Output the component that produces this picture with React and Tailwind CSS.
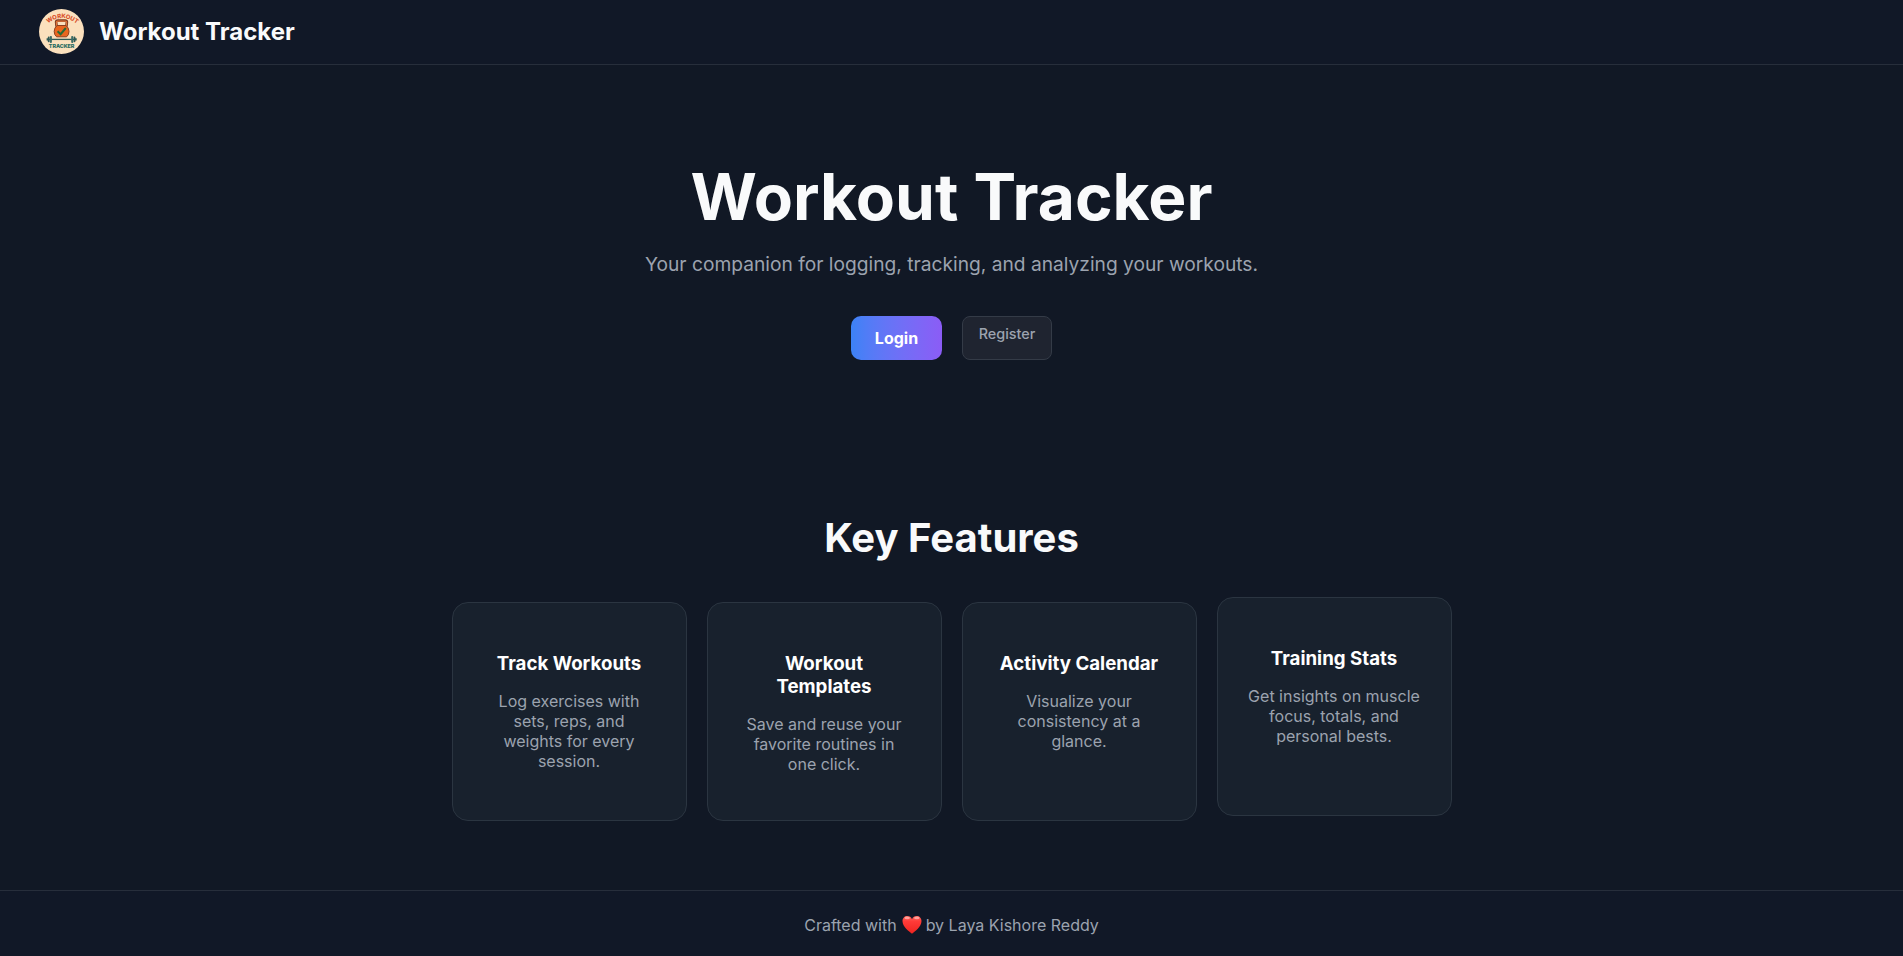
const FEATURES = [
  { title: "Track Workouts", text: "Log exercises with sets, reps, and weights for every session." },
  { title: "Workout Templates", text: "Save and reuse your favorite routines in one click." },
  { title: "Activity Calendar", text: "Visualize your consistency at a glance." },
  { title: "Training Stats", text: "Get insights on muscle focus, totals, and personal bests.", raised: true },
];

function Logo() {
  return (
    <svg viewBox="0 0 45 45" className="mb-px size-[45px] shrink-0">
      <defs>
        <path id="arc" d="M9 14.4 Q22.5 3.6 37 14.2" />
      </defs>
      <circle cx="22.5" cy="22.5" r="22.5" fill="#fbe0bd" />
      <text fill="#d9522c" className="font-[Inter] text-[6px] font-extrabold">
        <textPath href="#arc" textLength="31.5" lengthAdjust="spacing">WORKOUT</textPath>
      </text>
      <path d="M17.6 17.5 L17.1 13 Q17.2 11.6 18.8 11.6 H26.2 Q27.8 11.6 27.9 13 L27.4 17.5" fill="none" stroke="#7d3a20" strokeWidth="2.6" />
      <path d="M17.7 17 L17.3 13.3 Q17.4 12.1 18.7 12.1 H26.3 Q27.6 12.1 27.7 13.3 L27.3 17" fill="none" stroke="#e2743a" strokeWidth="1.1" />
      <path d="M18 16.5 H27 Q30 18.8 30 22.4 Q30 26 27.6 27.8 H17.6 Q15.2 26 15.2 22.4 Q15.2 18.8 18 16.5 Z" fill="#e9661f" stroke="#8a3f20" strokeWidth="1" />
      <path d="M18.6 22.2 L21.6 25.2 L26.8 19" fill="none" stroke="#2a6a35" strokeWidth="2" />
      <path d="M9 30.4 H36" stroke="#2f5a55" strokeWidth="1.3" />
      <path d="M7.6 29.3 h1.5 v2.2 h-1.5z M36 29.3 h1.7 v2.2 h-1.7z" fill="#2f5a55" />
      <rect x="8.8" y="27.6" width="1.8" height="5.6" rx=".8" fill="#2f5a55" />
      <rect x="10.8" y="26.9" width="2.1" height="7" rx=".9" fill="#3c6d66" />
      <rect x="32.2" y="26.9" width="2.1" height="7" rx=".9" fill="#3c6d66" />
      <rect x="34.6" y="27.6" width="1.8" height="5.6" rx=".8" fill="#2f5a55" />
      <text x="9.8" y="39.3" textLength="25.6" lengthAdjust="spacing" fill="#23695f" className="font-[Inter] text-[5.4px] font-extrabold">TRACKER</text>
    </svg>
  );
}

function Heart() {
  return (
    <svg viewBox="0 0 20 20" className="mr-1 ml-[5px] inline-block size-5 align-[-4px]">
      <defs>
        <linearGradient id="heart" x1="0" y1="0" x2="0" y2="1">
          <stop offset="0" stopColor="#ff6a61" />
          <stop offset=".3" stopColor="#ff3b38" />
          <stop offset="1" stopColor="#ee2420" />
        </linearGradient>
      </defs>
      <path d="M10 18.8 C7 16 .6 12 .5 6.2 C.5 3 2.6 1 5.2 1 C7.4 1 9.2 2.2 10 4.2 C10.8 2.2 12.6 1 14.8 1 C17.4 1 19.5 3 19.5 6.2 C19.4 12 13 16 10 18.8 Z" fill="url(#heart)" />
      <ellipse cx="5.2" cy="3" rx="2.7" ry="1.3" fill="#ffb3ac" opacity=".8" />
      <ellipse cx="14.8" cy="3" rx="2.7" ry="1.3" fill="#ffb3ac" opacity=".8" />
    </svg>
  );
}

export default function App() {
  return (
    <div className="flex h-[956px] flex-col bg-[#111825] font-[Inter,sans-serif] text-[#f9fafb]">
      <header className="flex h-[65px] shrink-0 items-center gap-[15px] border-b border-[#272e3b] bg-[#111827] px-[39px]">
        <Logo />
        <span className="text-2xl font-bold">Workout Tracker</span>
      </header>

      <section className="flex h-[440px] shrink-0 flex-col items-center pt-[93px]">
        <h1 className="text-[64px] leading-[77px] font-bold">Workout Tracker</h1>
        <p className="mt-[17px] text-[19.2px] leading-6 text-[#9ca3af]">
          Your companion for logging, tracking, and analyzing your workouts.
        </p>
        <div className="mt-10 flex h-11 gap-5">
          <button className="w-[91px] rounded-[10px] bg-linear-to-r from-[#3b82f6] to-[#8b5cf6] text-base font-bold text-white">
            Login
          </button>
          <button className="flex w-[90px] justify-center rounded-lg border border-[#343b47] bg-[#1f2430] pt-[7px] text-[14.4px] leading-5 font-medium text-[#9ca3af]">
            Register
          </button>
        </div>
      </section>

      <section className="flex flex-1 flex-col items-center">
        <h2 className="mt-[9px] text-[40px] leading-12 font-bold">Key Features</h2>
        <div className="mt-10 grid h-[219px] w-[1000px] grid-cols-4 gap-5">
          {FEATURES.map((f) => (
            <article
              key={f.title}
              className={`rounded-2xl border border-[#2b3541] bg-[#18212d] px-[30px] pt-[49px] text-center ${f.raised ? "-translate-y-[5px]" : ""}`}
            >
              <h3 className="text-[18.7px] leading-[23px] font-bold text-white">{f.title}</h3>
              <p className="mt-4 text-base leading-5 text-[#9ca3af]">{f.text}</p>
            </article>
          ))}
        </div>
      </section>

      <footer className="flex h-[66px] shrink-0 justify-center border-t border-[#272e3b] bg-[#111827] pt-[22px] text-base text-[#9ca3af]">
        <p>
          Crafted with
          <Heart />
          by Laya Kishore Reddy
        </p>
      </footer>
    </div>
  );
}
